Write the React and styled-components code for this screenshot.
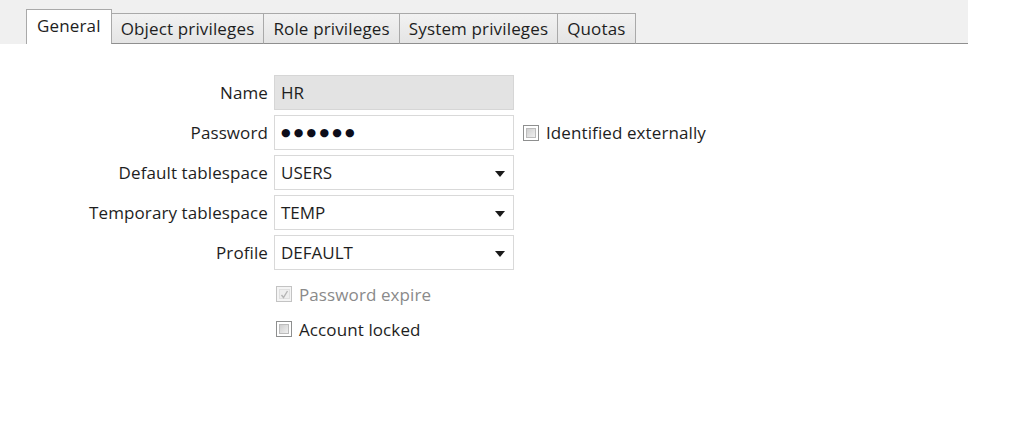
import styled, { createGlobalStyle } from 'styled-components';

const Global = createGlobalStyle`
  body {
    margin: 0;
    background: #fff;
    font-family: "Open Sans", "Liberation Sans", sans-serif;
    color: #1e1e1e;
  }
`;

const Page = styled.div`
  width: 1016px;
  height: 435px;
  background: #fff;
`;

const TabBand = styled.div`
  width: 968px;
  height: 44px;
  background: #f0f0f0;
  display: flex;
  align-items: flex-end;
  padding-left: 27px;
  box-sizing: border-box;
`;

const Tab = styled.div`
  box-sizing: border-box;
  height: ${(p) => (p.$active ? '35px' : '31px')};
  padding: 0 ${(p) => (p.$active ? '10px' : '9px')};
  display: flex;
  align-items: center;
  font-size: 17px;
  letter-spacing: 0.15px;
  background: ${(p) => (p.$active ? '#fff' : 'linear-gradient(#f2f2f2, #e4e4e4)')};
  border: 1px solid #a9a9a9;
  border-bottom: ${(p) => (p.$active ? 'none' : '1px solid #8f8f8f')};
  margin-left: -1px;
  padding-bottom: ${(p) => (p.$active ? '4px' : '0')};
`;

const TabFill = styled.div`
  flex: 1;
  height: 1px;
  border-bottom: 1px solid #8f8f8f;
`;

const Form = styled.div`
  display: grid;
  grid-template-columns: 268px 240px auto;
  column-gap: 6px;
  row-gap: 5px;
  padding-top: 31px;
  align-items: center;
`;

const Label = styled.div`
  text-align: right;
  font-size: 17px;
  letter-spacing: 0.1px;
`;

const Field = styled.div`
  box-sizing: border-box;
  height: 35px;
  display: flex;
  align-items: center;
  justify-content: space-between;
  padding: 0 8px 0 6px;
  font-size: 17px;
  border: 1px solid ${(p) => (p.$disabled ? '#d6d6d6' : '#d9d9d9')};
  background: ${(p) => (p.$disabled ? '#e3e3e3' : '#fff')};
`;

const Dots = styled.span`
  font-family: "DejaVu Sans", sans-serif;
  font-size: 11px;
  letter-spacing: 3.2px;
  color: #0d0d1a;
`;

const Arrow = styled.span`
  width: 0;
  height: 0;
  border-left: 5px solid transparent;
  border-right: 5px solid transparent;
  border-top: 6px solid #1a1a1a;
  margin-top: 2px;
`;

const Check = styled.label`
  display: flex;
  align-items: center;
  gap: 7px;
  font-size: 17px;
  letter-spacing: 0.1px;
  color: ${(p) => (p.$disabled ? '#8a8a8a' : '#1e1e1e')};
  height: ${(p) => p.$h || '35px'};
  padding-left: ${(p) => p.$indent || '0'};
`;

const Box = styled.span`
  box-sizing: border-box;
  width: 16px;
  height: 16px;
  border: 1px solid ${(p) => (p.$disabled ? '#c3c3c3' : '#8e8f8f')};
  background: ${(p) => (p.$disabled ? '#f4f4f4' : '#fff')};
  padding: 2px;
  display: flex;
`;

const BoxInner = styled.span`
  flex: 1;
  background: ${(p) => (p.$disabled ? '#eeeeee' : 'linear-gradient(135deg, #cfcfcf, #f0f0f0)')};
  border: 1px solid ${(p) => (p.$disabled ? '#e0e0e0' : '#bcbcbc')};
  display: flex;
  align-items: center;
  justify-content: center;
`;

const Empty = styled.div``;

function CheckBox({ checked, disabled }) {
  return (
    <Box $disabled={disabled}>
      <BoxInner $disabled={disabled}>
        {checked && (
          <svg width="9" height="9" viewBox="0 0 9 9">
            <path d="M1.5 5 L3.5 7.5 L7.5 1" fill="none" stroke="#b5b5b5" strokeWidth="1.4" />
          </svg>
        )}
      </BoxInner>
    </Box>
  );
}

const tabs = ['General', 'Object privileges', 'Role privileges', 'System privileges', 'Quotas'];

export default function App() {
  return (
    <Page>
      <Global />
      <TabBand>
        {tabs.map((t, i) => (
          <Tab key={t} $active={i === 0}>
            {t}
          </Tab>
        ))}
        <TabFill />
      </TabBand>
      <Form>
        <Label>Name</Label>
        <Field $disabled>HR</Field>
        <Empty />

        <Label>Password</Label>
        <Field>
          <Dots>●●●●●●</Dots>
        </Field>
        <Check $indent="3px">
          <CheckBox />
          Identified externally
        </Check>

        <Label>Default tablespace</Label>
        <Field>
          USERS
          <Arrow />
        </Field>
        <Empty />

        <Label>Temporary tablespace</Label>
        <Field>
          TEMP
          <Arrow />
        </Field>
        <Empty />

        <Label>Profile</Label>
        <Field>
          DEFAULT
          <Arrow />
        </Field>
        <Empty />

        <Empty />
        <Check $disabled $indent="2px" $h="38px">
          <CheckBox checked disabled />
          Password expire
        </Check>
        <Empty />

        <Empty />
        <Check $indent="2px" $h="22px">
          <CheckBox />
          Account locked
        </Check>
        <Empty />
      </Form>
    </Page>
  );
}
